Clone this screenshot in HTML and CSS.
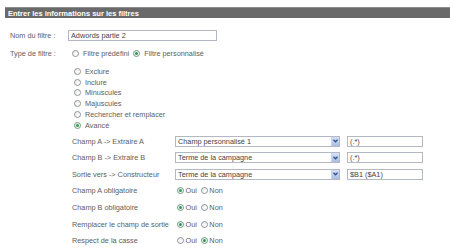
FILE: index.html
```html
<!DOCTYPE html>
<html lang="fr">
<head>
    <meta charset="UTF-8">
    <title>Informations sur les filtres</title>
    <link rel="stylesheet" href="styles.css">
</head>
<body>
    <div class="panel">
        <div class="panel-title">Entrer les informations sur les filtres</div>

        <div class="panel-body">
            <div class="row row-name">
                <label class="label" for="filterName">Nom du filtre :</label>
                <input type="text" id="filterName" class="text-input name-input" value="Adwords partie 2">
            </div>

            <div class="row row-type">
                <span class="label">Type de filtre :</span>
                <label class="option"><input type="radio" name="type"> Filtre prédéfini</label>
                <label class="option"><input type="radio" name="type" checked> Filtre personnalisé</label>
            </div>

            <div class="option-list">
                <label class="option"><input type="radio" name="custom"> Exclure</label>
                <label class="option"><input type="radio" name="custom"> Inclure</label>
                <label class="option"><input type="radio" name="custom"> Minuscules</label>
                <label class="option"><input type="radio" name="custom"> Majuscules</label>
                <label class="option"><input type="radio" name="custom"> Rechercher et remplacer</label>
                <label class="option"><input type="radio" name="custom" checked> Avancé</label>
            </div>

            <div class="advanced">
                <div class="adv-row">
                    <span class="adv-label">Champ A -&gt; Extraire A</span>
                    <div class="select">
                        <span class="select-text">Champ personnalisé 1</span>
                        <span class="select-arrow">
                            <svg width="5" height="4" viewBox="0 0 5 4"><path d="M0.5 0.8 L2.5 2.8 L4.5 0.8" fill="none" stroke="#2f4f8e" stroke-width="1.3"/></svg>
                        </span>
                    </div>
                    <input type="text" class="text-input field-input" value="(.*)">
                </div>

                <div class="adv-row">
                    <span class="adv-label">Champ B -&gt; Extraire B</span>
                    <div class="select">
                        <span class="select-text">Terme de la campagne</span>
                        <span class="select-arrow">
                            <svg width="5" height="4" viewBox="0 0 5 4"><path d="M0.5 0.8 L2.5 2.8 L4.5 0.8" fill="none" stroke="#2f4f8e" stroke-width="1.3"/></svg>
                        </span>
                    </div>
                    <input type="text" class="text-input field-input" value="(.*)">
                </div>

                <div class="adv-row">
                    <span class="adv-label">Sortie vers -&gt; Constructeur</span>
                    <div class="select">
                        <span class="select-text">Terme de la campagne</span>
                        <span class="select-arrow">
                            <svg width="5" height="4" viewBox="0 0 5 4"><path d="M0.5 0.8 L2.5 2.8 L4.5 0.8" fill="none" stroke="#2f4f8e" stroke-width="1.3"/></svg>
                        </span>
                    </div>
                    <input type="text" class="text-input field-input" value="$B1 ($A1)">
                </div>

                <div class="adv-row">
                    <span class="adv-label">Champ A obligatoire</span>
                    <label class="yesno"><input type="radio" name="reqA" checked> Oui</label>
                    <label class="yesno"><input type="radio" name="reqA"> Non</label>
                </div>

                <div class="adv-row">
                    <span class="adv-label">Champ B obligatoire</span>
                    <label class="yesno"><input type="radio" name="reqB" checked> Oui</label>
                    <label class="yesno"><input type="radio" name="reqB"> Non</label>
                </div>

                <div class="adv-row">
                    <span class="adv-label">Remplacer le champ de sortie</span>
                    <label class="yesno"><input type="radio" name="override" checked> Oui</label>
                    <label class="yesno"><input type="radio" name="override"> Non</label>
                </div>

                <div class="adv-row">
                    <span class="adv-label">Respect de la casse</span>
                    <label class="yesno"><input type="radio" name="case"> Oui</label>
                    <label class="yesno"><input type="radio" name="case" checked> Non</label>
                </div>
            </div>
        </div>
    </div>
</body>
</html>
```

FILE: styles.css
```css
* {
    margin: 0;
    padding: 0;
    box-sizing: border-box;
}

body {
    font-family: "Liberation Sans", Arial, sans-serif;
    font-size: 7.3px;
    color: #606060;
    background: #fff;
    padding-top: 7px;
    overflow: hidden;
}

.panel-title {
    margin-left: 5px;
    height: 11px;
    line-height: 11px;
    padding-left: 3px;
    background: #6a6a6a;
    border-top: 1px solid #8c8c8c;
    color: #fff;
    font-weight: bold;
    font-size: 7.5px;
    white-space: nowrap;
}

.panel-body {
    padding-left: 10px;
}

.row {
    display: flex;
    align-items: center;
}

.row-name {
    margin-top: 12px;
    height: 11px;
}

.row-type {
    margin-top: 7px;
    height: 11px;
}

.label {
    width: 62px;
    flex-shrink: 0;
}

.row-name .label {
    width: 58px;
}

.text-input {
    height: 11px;
    border: 1px solid #b4b8c4;
    font-family: inherit;
    font-size: 7.3px;
    color: #444;
    padding: 0 2px;
    background: #fff;
    outline: none;
}

.name-input {
    width: 149px;
}

.option {
    display: flex;
    align-items: center;
    gap: 4px;
    margin-right: 4px;
    white-space: nowrap;
}

.option-list {
    margin-top: 7px;
    padding-left: 64px;
}

.option-list .option {
    height: 10.8px;
}

input[type="radio"] {
    appearance: none;
    -webkit-appearance: none;
    width: 7px;
    height: 7px;
    border: 1px solid #8e9496;
    border-radius: 50%;
    background: linear-gradient(135deg, #e4e6e8 0%, #ffffff 70%);
    flex-shrink: 0;
    display: inline-flex;
    align-items: center;
    justify-content: center;
}

input[type="radio"]:checked {
    border-color: #6f9a80;
}

input[type="radio"]:checked::after {
    content: "";
    width: 3px;
    height: 3px;
    border-radius: 50%;
    background: #2f9a52;
}

.advanced {
    margin-top: 2px;
    padding-left: 62px;
}

.adv-row {
    display: flex;
    align-items: center;
    height: 16.6px;
}

.adv-label {
    width: 103px;
    flex-shrink: 0;
    white-space: nowrap;
}

.select {
    width: 165px;
    height: 11px;
    display: flex;
    align-items: stretch;
    border: 1px solid #b4b8c4;
    background: #fff;
    color: #444;
}

.select-text {
    flex: 1;
    padding-left: 2px;
    line-height: 9px;
    white-space: nowrap;
}

.select-arrow {
    width: 8px;
    display: flex;
    align-items: center;
    justify-content: center;
    background: linear-gradient(180deg, #d6e1f5 0%, #a9bde3 100%);
    border-left: 1px solid #c8d3ea;
}

.field-input {
    width: 76px;
    margin-left: 7px;
}

.yesno {
    display: flex;
    align-items: center;
    gap: 1.5px;
    margin-left: 2px;
    margin-right: 2px;
    white-space: nowrap;
}
```
